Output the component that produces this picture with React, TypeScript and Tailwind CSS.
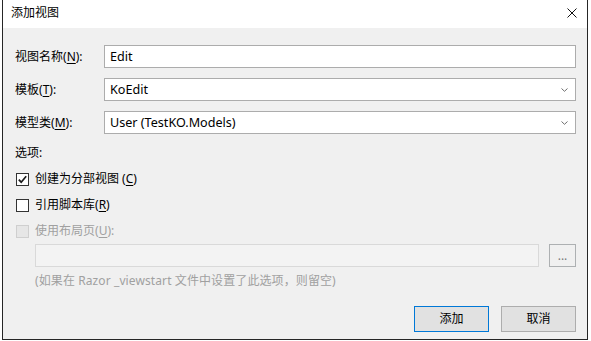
import React from "react";

const Mnemonic = ({ text, k, after = "" }: { text: string; k: string; after?: string }) => (
  <span>
    {text}(<u className="underline-offset-2">{k}</u>){after}
  </span>
);

const Chevron = () => (
  <svg width="7" height="4" viewBox="0 0 7 4" className="mr-[2px]">
    <path d="M0.5 0.5 L3.5 3.3 L6.5 0.5" fill="none" stroke="#6e6e6e" strokeWidth="1" />
  </svg>
);

const FieldRow = ({
  label,
  k,
  value,
  dropdown,
  className = "",
}: {
  label: string;
  k: string;
  value: string;
  dropdown?: boolean;
  className?: string;
}) => (
  <div className={"flex items-center h-[23px] " + className}>
    <div className="w-[89px] text-black">
      <Mnemonic text={label} k={k} after=":" />
    </div>
    <div className="flex-1 h-full border border-[#acacac] bg-white pl-[5px] pr-[5px] flex items-center justify-between text-black">
      <span className="text-[12.6px]">{value}</span>
      {dropdown && <Chevron />}
    </div>
  </div>
);

const CheckBox = ({ checked, disabled }: { checked?: boolean; disabled?: boolean }) => (
  <div
    className={
      "w-[13px] h-[13px] ml-[1px] mr-[6px] border flex items-center justify-center " +
      (disabled ? "border-[#cfcfcf] bg-[#e6e6e6]" : "border-[#333333] bg-white")
    }
  >
    {checked && (
      <svg width="11" height="11" viewBox="0 0 11 11">
        <path d="M1.8 5.6 L4.2 8.2 L9.2 2.3" fill="none" stroke="#1a1a1a" strokeWidth="1.7" />
      </svg>
    )}
  </div>
);

export default function App() {
  return (
    <div className="w-[591px] h-[341px] bg-white overflow-hidden text-[12px] leading-[16px] font-['Noto_Sans','Noto_Sans_CJK_SC',sans-serif]">
      <div className="ml-[2px] w-[586px] h-[340px] border-x border-b border-[#262626] flex flex-col">
        <div className="h-[28px] bg-white flex items-start justify-between pl-[8px] pr-[10px] pt-[5px] text-black">
          <span>添加视图</span>
          <svg width="10" height="10" viewBox="0 0 10 10" className="mt-[3px]">
            <path d="M0.5 0.5 L9.5 9.5 M9.5 0.5 L0.5 9.5" stroke="#111" strokeWidth="1" />
          </svg>
        </div>

        <div className="flex-1 bg-[#f0f0f0] pl-[12px] pr-[11px] pt-[17px] flex flex-col">
          <FieldRow label="视图名称" k="N" value="Edit" />
          <FieldRow label="模板" k="T" value="KoEdit" dropdown className="mt-[10px]" />
          <FieldRow label="模型类" k="M" value="User (TestKO.Models)" dropdown className="mt-[10px]" />

          <div className="mt-[11px] h-[16px] text-black">选项:</div>

          <div className="mt-[10px] h-[16px] flex items-center text-black">
            <CheckBox checked />
            <span>
              创建为分部视图 (<u className="underline-offset-2">C</u>)
            </span>
          </div>

          <div className="mt-[10px] h-[16px] flex items-center text-black">
            <CheckBox />
            <Mnemonic text="引用脚本库" k="R" />
          </div>

          <div className="mt-[10px] h-[16px] flex items-center text-[#a0a0a0]">
            <CheckBox disabled />
            <Mnemonic text="使用布局页" k="U" after=":" />
          </div>

          <div className="mt-[5px] ml-[20px] flex items-center gap-[10px] h-[23px]">
            <div className="flex-1 h-full border border-[#d9d9d9] bg-[#f3f3f3]" />
            <button className="w-[27px] h-full border border-[#adb0b2] bg-[#f0f0f0] text-[#7a7a7a] leading-[10px] flex items-center justify-center">
              ...
            </button>
          </div>

          <div className="mt-[6px] ml-[20px] h-[16px] text-[#a0a0a0] tracking-[0.1px]">
            (如果在 Razor _viewstart 文件中设置了此选项，则留空)
          </div>

          <div className="mt-[17px] flex justify-end gap-[12px]">
            <button className="w-[75px] h-[26px] border border-[#0078d7] bg-[#e1e1e1] text-black">添加</button>
            <button className="w-[75px] h-[26px] border border-[#adadad] bg-[#e1e1e1] text-black">取消</button>
          </div>
        </div>
      </div>
    </div>
  );
}
